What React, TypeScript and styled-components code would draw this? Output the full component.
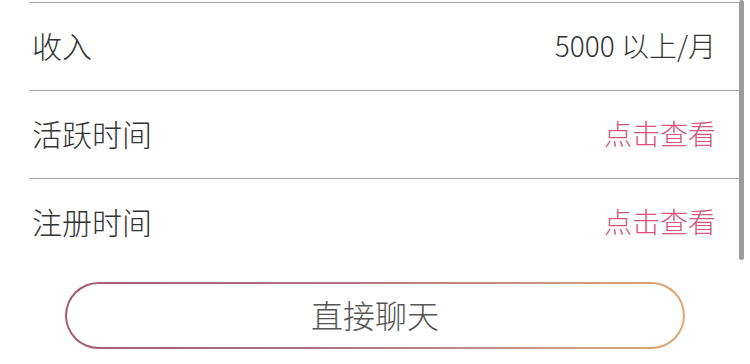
import styled, { createGlobalStyle } from 'styled-components';

const GlobalStyle = createGlobalStyle`
  html, body {
    margin: 0;
    padding: 0;
    background: #ffffff;
    overflow: hidden;
  }
  body {
    font-family: "Noto Sans CJK SC", "Noto Sans", sans-serif;
  }
`;

const Page = styled.div`
  width: 750px;
  height: 364px;
  padding-top: 2px;
  box-sizing: border-box;
  position: relative;
`;

const List = styled.ul`
  list-style: none;
  margin: 0 10px 0 30px;
  padding: 0;
`;

const Row = styled.li`
  height: 88px;
  box-sizing: border-box;
  border-top: 1px solid #a8a8a8;
  display: flex;
  align-items: center;
  justify-content: space-between;
  padding: 0 24px 3px 2px;
`;

const Label = styled.span`
  font-size: 30px;
  font-weight: 300;
  color: #333333;
  line-height: 1;
`;

const Value = styled.span<{ $link?: boolean }>`
  font-size: 28px;
  font-weight: 300;
  line-height: 1;
  color: ${(p) => (p.$link ? '#d5547c' : '#333333')};
`;

const ChatButton = styled.button`
  display: flex;
  align-items: center;
  justify-content: center;
  width: 620px;
  height: 67px;
  margin: 16px auto 0;
  border: 2px solid transparent;
  border-radius: 34px;
  background:
    linear-gradient(#ffffff, #ffffff) padding-box,
    linear-gradient(90deg, #a65c74 0%, #b07484 45%, #c99a82 80%, #dca870 100%) border-box;
  font-family: "Noto Sans CJK SC", "Noto Sans", sans-serif;
  font-size: 32px;
  font-weight: 300;
  color: #555555;
  cursor: pointer;
  padding: 0 0 3px;
`;

const ScrollThumb = styled.div`
  position: absolute;
  top: 0;
  right: 6px;
  width: 5px;
  height: 260px;
  border-radius: 3px;
  background: #9c9c9c;
`;

const rows = [
  { label: '收入', value: '5000 以上/月', link: false },
  { label: '活跃时间', value: '点击查看', link: true },
  { label: '注册时间', value: '点击查看', link: true },
];

export default function App() {
  return (
    <Page>
      <GlobalStyle />
      <List>
        {rows.map((r) => (
          <Row key={r.label}>
            <Label>{r.label}</Label>
            <Value $link={r.link}>{r.value}</Value>
          </Row>
        ))}
      </List>
      <ChatButton>直接聊天</ChatButton>
      <ScrollThumb />
    </Page>
  );
}
